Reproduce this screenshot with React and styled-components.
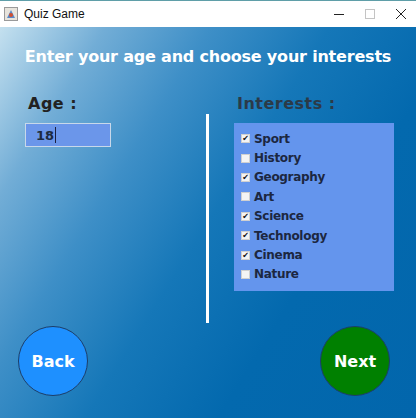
import React, { useState } from "react"
import styled, { createGlobalStyle } from "styled-components"

const FONT = `"DejaVu Sans", "Liberation Sans", sans-serif`

const interests = [
  { name: "Sport", checked: true },
  { name: "History", checked: false },
  { name: "Geography", checked: true },
  { name: "Art", checked: false },
  { name: "Science", checked: true },
  { name: "Technology", checked: true },
  { name: "Cinema", checked: true },
  { name: "Nature", checked: false },
]

const App = () => {
  const [items, setItems] = useState(interests)
  const toggle = (i) =>
    setItems(items.map((it, k) => (k === i ? { ...it, checked: !it.checked } : it)))

  return (
    <Window>
      <GlobalStyle />
      <TitleBar>
        <AppIcon>
          <svg width="14" height="14" viewBox="0 0 14 14">
            <rect x="0.5" y="0.5" width="13" height="13" fill="#e8e4dc" stroke="#9a9a9a" />
            <path d="M3 11 L7 3 L11 11 Z" fill="#5a8ac8" />
            <circle cx="7" cy="8" r="2" fill="#d05030" />
          </svg>
        </AppIcon>
        <WindowTitle>Quiz Game</WindowTitle>
        <WindowControls>
          <ControlButton>
            <svg width="10" height="10" viewBox="0 0 10 10"><path d="M0 5.5 H10" stroke="#222" /></svg>
          </ControlButton>
          <ControlButton>
            <svg width="10" height="10" viewBox="0 0 10 10"><rect x="0.5" y="0.5" width="9" height="9" fill="none" stroke="#c4c4c4" /></svg>
          </ControlButton>
          <ControlButton>
            <svg width="10" height="10" viewBox="0 0 10 10"><path d="M0 0 L10 10 M10 0 L0 10" stroke="#222" /></svg>
          </ControlButton>
        </WindowControls>
      </TitleBar>

      <Content>
        <Heading>Enter your age and choose your interests</Heading>
        <Columns>
          <Column>
            <Label>Age :</Label>
            <AgeField>
              18<Caret />
            </AgeField>
          </Column>
          <Divider />
          <Column>
            <Label $muted>Interests :</Label>
            <InterestPanel>
              {items.map((it, i) => (
                <InterestRow key={it.name} onClick={() => toggle(i)}>
                  <Box>{it.checked && "✔"}</Box>
                  {it.name}
                </InterestRow>
              ))}
            </InterestPanel>
          </Column>
        </Columns>
        <Footer>
          <RoundButton $color="#1e90ff">Back</RoundButton>
          <RoundButton $color="#008000">Next</RoundButton>
        </Footer>
      </Content>
    </Window>
  )
}
export default App

const GlobalStyle = createGlobalStyle`
  html, body {
    margin: 0;
    padding: 0;
    width: 416px;
    height: 418px;
    overflow: hidden;
  }
`

const Window = styled.div`
  width: 416px;
  height: 418px;
  display: flex;
  flex-direction: column;
  font-family: ${FONT};
`

const TitleBar = styled.div`
  height: 27px;
  box-sizing: border-box;
  border-top: 1px solid #5f9ea8;
  background: #fff;
  display: flex;
  align-items: center;
  padding-left: 3px;
`

const AppIcon = styled.div`
  width: 16px;
  height: 16px;
  display: flex;
  align-items: center;
  justify-content: center;
`

const WindowTitle = styled.div`
  font-family: "Liberation Sans", sans-serif;
  font-size: 12px;
  color: #111;
  margin-left: 5px;
`

const WindowControls = styled.div`
  margin-left: auto;
  display: flex;
`

const ControlButton = styled.div`
  width: 31px;
  height: 26px;
  display: flex;
  align-items: center;
  justify-content: center;
`

const Content = styled.div`
  flex: 1;
  background: linear-gradient(122deg, #c4e0ef 0%, #72add6 16%, #3e8fc7 32%, #1577b8 50%, #0369ae 70%, #0266ac 100%);
  display: flex;
  flex-direction: column;
`

const Heading = styled.div`
  color: #fff;
  font-weight: bold;
  font-size: 16px;
  text-align: center;
  margin-top: 20px;
  letter-spacing: -0.2px;
`

const Columns = styled.div`
  display: flex;
  margin-top: 28px;
  height: 232px;
`

const Column = styled.div`
  width: 206px;
  box-sizing: border-box;
  padding-left: 25px;
  display: flex;
  flex-direction: column;
  align-items: flex-start;
`

const Label = styled.div`
  font-weight: bold;
  font-size: 16px;
  color: ${(p) => (p.$muted ? "#2b3a48" : "#222")};
  margin-left: 3px;
  height: 20px;
  letter-spacing: 0.5px;
`

const AgeField = styled.div`
  margin-top: 9px;
  width: 86px;
  height: 24px;
  box-sizing: border-box;
  background: #6b96ea;
  border: 1px solid #c8d8ea;
  font-weight: bold;
  font-size: 13px;
  color: #1c2a40;
  padding-left: 10px;
  display: flex;
  align-items: center;
`

const Caret = styled.span`
  display: inline-block;
  width: 1px;
  height: 16px;
  background: #1a2040;
  margin-left: 1px;
`

const Divider = styled.div`
  width: 3px;
  flex-shrink: 0;
  background: #fff;
  margin-top: 20px;
  height: 209px;
`

const InterestPanel = styled.div`
  margin-top: 9px;
  width: 160px;
  height: 168px;
  box-sizing: border-box;
  background: #6495ed;
  padding: 6px 0 0 7px;
  display: flex;
  flex-direction: column;
`

const InterestRow = styled.div`
  height: 19.4px;
  display: flex;
  align-items: center;
  gap: 4px;
  font-weight: bold;
  font-size: 12px;
  letter-spacing: -0.3px;
  color: #1c2740;
  cursor: pointer;
`

const Box = styled.span`
  width: 9px;
  height: 9px;
  box-sizing: border-box;
  background: #f4f4f4;
  border: 1px solid #d0d0d0;
  font-size: 8px;
  line-height: 7px;
  color: #111;
  display: flex;
  align-items: center;
  justify-content: center;
`

const Footer = styled.div`
  display: flex;
  justify-content: space-between;
  padding: 0 26px 0 18px;
`

const RoundButton = styled.button`
  width: 70px;
  height: 70px;
  border-radius: 50%;
  background: ${(p) => p.$color};
  border: 1px solid #1c3e6a;
  color: #fff;
  font-family: ${FONT};
  font-weight: bold;
  font-size: 16px;
  padding: 0;
  cursor: pointer;
`
